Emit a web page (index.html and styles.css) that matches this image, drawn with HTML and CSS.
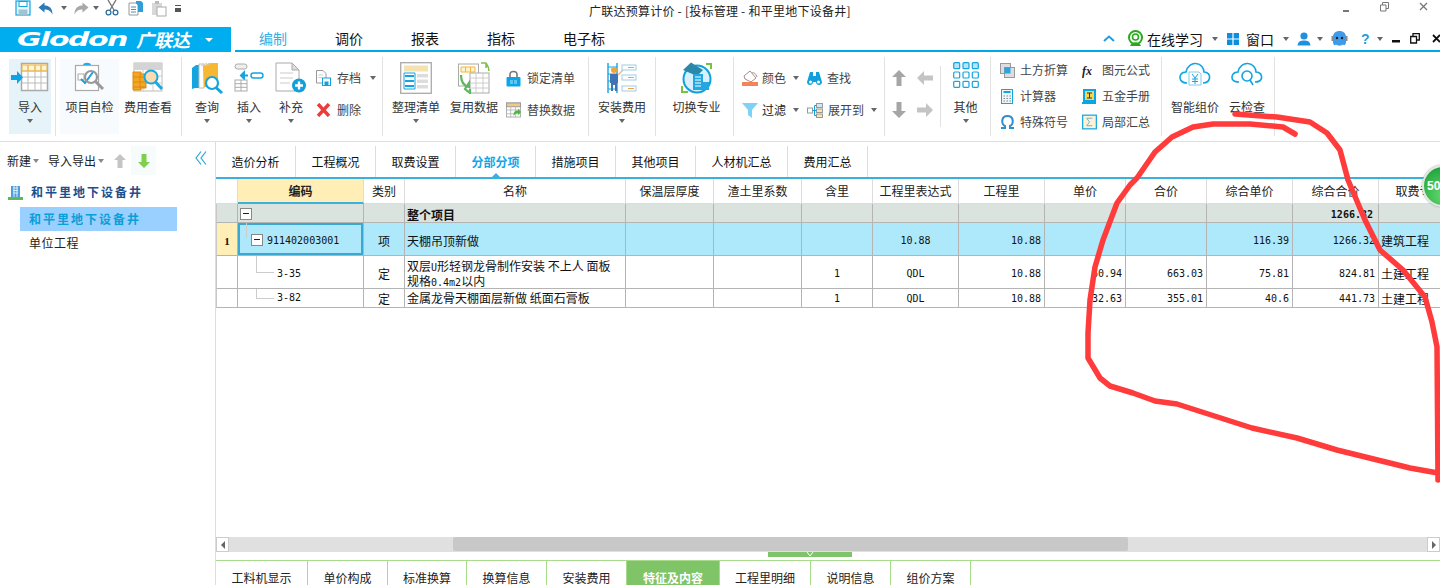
FILE: index.html
```html
<!DOCTYPE html>
<html lang="zh-CN">
<head>
<meta charset="utf-8">
<title>广联达预算计价</title>
<link rel="stylesheet" href="styles.css">
</head>
<body>
<div class="app">
  <header class="titlebar">
    <div class="qat">
      <svg class="q1" width="16" height="16" viewBox="0 0 16 16"><rect x="1" y="1" width="14" height="14" fill="#e8f6fd" stroke="#12a3e0" stroke-width="1.2"/><rect x="4" y="1.5" width="8" height="5" fill="#fff" stroke="#12a3e0"/><rect x="3.5" y="9.5" width="9" height="5.5" fill="#9fc4d6"/></svg>
      <svg class="q2" width="15" height="13" viewBox="0 0 15 13"><path d="M0.5 5.5 L6.5 0.5 V3.5 C11 3.5 14.5 6 14.5 12.5 C12.5 8.5 10 7.5 6.5 7.5 V10.5 Z" fill="#2c79b8"/></svg>
      <span class="caret q3"></span>
      <svg class="q4" width="15" height="13" viewBox="0 0 15 13"><path d="M14.5 5.5 L8.5 0.5 V3.5 C4 3.5 0.5 6 0.5 12.5 C2.5 8.5 5 7.5 8.5 7.5 V10.5 Z" fill="#a8a8a8"/></svg>
      <span class="caret q5"></span>
      <svg class="q6" width="14" height="16" viewBox="0 0 14 16"><path d="M3 0 L9 10 M11 0 L5 10" stroke="#777" stroke-width="1.4" fill="none"/><circle cx="3.5" cy="12.5" r="2.4" fill="none" stroke="#2f6f9f" stroke-width="1.3"/><circle cx="10.5" cy="12.5" r="2.4" fill="none" stroke="#2f6f9f" stroke-width="1.3"/></svg>
      <svg class="q7" width="16" height="16" viewBox="0 0 16 16"><path d="M1 3 H8 L10 5 V15 H1 Z" fill="#fff" stroke="#999"/><path d="M3 7 H8 M3 9.5 H8 M3 12 H8" stroke="#4a8fb5"/><path d="M8 1 H13 L15 3 V12 H10 V5 L8 3 Z" fill="#2f9fd6"/></svg>
      <svg class="q8" width="16" height="17" viewBox="0 0 16 17"><rect x="1" y="3" width="10" height="12" fill="#d8d8d8"/><rect x="4" y="1" width="4" height="3" fill="#bbb"/><rect x="6" y="7" width="9" height="9" fill="#fff" stroke="#aaa"/></svg>
      <span class="more"></span>
    </div>
    <div class="apptitle">广联达预算计价 - [投标管理 - 和平里地下设备井]</div>
    <div class="winbtns">
      <svg width="8" height="16" viewBox="0 0 8 16"><rect x="1" y="8" width="6" height="2" fill="#777"/></svg>
      <svg width="9" height="10" viewBox="0 0 9 10"><path d="M0.5 3 H6 V9 H0.5 Z M2.5 3 V0.5 H8.5 V6.5 H6" fill="none" stroke="#777"/></svg>
      <svg width="9" height="10" viewBox="0 0 9 10"><path d="M1 1 L8 8 M8 1 L1 8" stroke="#777" stroke-width="1.3"/></svg>
    </div>
  </header>

  <nav class="menubar">
    <div class="logo"><span class="logo-en">Glodon</span><span class="logo-cn">广联达</span><span class="caret caret-w"></span></div>
    <div class="menutabs">
      <span class="mtab mtab-on">编制</span><span class="mtab">调价</span><span class="mtab">报表</span><span class="mtab">指标</span><span class="mtab mtab-last">电子标</span>
    </div>
    <div class="helpbar">
      <svg class="h1" width="12" height="7" viewBox="0 0 12 7"><path d="M1 6 L6 1.5 L11 6" fill="none" stroke="#1f9fe0" stroke-width="2"/></svg>
      <svg class="h2" width="17" height="18" viewBox="0 0 17 18"><circle cx="8.5" cy="7.5" r="6.5" fill="none" stroke="#2aa81e" stroke-width="2"/><circle cx="8.5" cy="7" r="3" fill="none" stroke="#2aa81e" stroke-width="1.6"/><path d="M3 16 C5 11 12 11 14 16 Z" fill="#2aa81e"/></svg>
      <span class="h3">在线学习</span><span class="caret h4"></span>
      <svg class="h5" width="12" height="12" viewBox="0 0 12 12"><path d="M0 0 H5.4 V5.4 H0 Z M6.6 0 H12 V5.4 H6.6 Z M0 6.6 H5.4 V12 H0 Z M6.6 6.6 H12 V12 H6.6 Z" fill="#0d8fe0"/></svg>
      <span class="h6">窗口</span><span class="caret h7"></span>
      <svg class="h8" width="14" height="14" viewBox="0 0 14 14"><circle cx="7" cy="4" r="3.6" fill="#1f8fe0"/><path d="M0.5 13.5 C1 9 4 8.5 7 8.5 C10 8.5 13 9 13.5 13.5 Z" fill="#1f8fe0"/></svg>
      <span class="caret h9"></span>
      <svg class="h10" width="17" height="17" viewBox="0 0 17 17"><path d="M2 7 C2 3 5 1 8.5 1 C12 1 15 3 15 7 V12 C15 15 13 16 12 14.5 C10.500 16 6.500 16 5 14.500 C4 16 2 15 2 12 Z" fill="#3f9be8"/><circle cx="6" cy="8" r="1.200" fill="#123"/><circle cx="11" cy="8" r="1.200" fill="#123"/><rect x="0.500" y="6" width="2" height="5" fill="#8a8a8a"/><rect x="14.500" y="6" width="2" height="5" fill="#8a8a8a"/></svg>
      <span class="h11">?</span><span class="caret h12"></span>
      <svg class="h13" width="8" height="3" viewBox="0 0 8 3"><rect width="8" height="2.500" fill="#111"/></svg>
      <svg class="h14" width="10" height="11" viewBox="0 0 10 11"><path d="M0.700 3.500 H6.500 V10 H0.700 Z M3 3.500 V0.700 H9.300 V7 H6.500" fill="none" stroke="#111" stroke-width="1.300"/></svg>
      <svg class="h15" width="9" height="9" viewBox="0 0 9 9"><path d="M1 1 L8 8 M8 1 L1 8" stroke="#111" stroke-width="1.800"/></svg>
    </div>
  </nav>

  <section class="ribbon">
    <div class="group g1">
      <div class="bigbtn w42 hot">
        <div class="ico"><svg width="38" height="30" viewBox="0 0 38 30"><rect x="10.500" y="1.500" width="26" height="27" fill="#fff" stroke="#aaa" stroke-width="1.500"/><path d="M12 3 H35 V9 H12 Z" fill="#fff3d0"/><path d="M11 9 H36 M11 15 H36 M11 21 H36 M17 3 V28 M24 3 V28 M30 3 V28" stroke="#bbb" fill="none"/><path d="M11 3 H36 V9 H11 Z M17 3 V9 M24 3 V9 M30 3 V9" stroke="#f7b733" fill="none"/><path d="M0 13 H6 V9 L12 15.500 L6 22 V18 H0 Z" fill="#0aa5e8"/></svg></div>
        <span class="lbl">导入</span><span class="caret"></span>
      </div>
    </div>
    <div class="group g2">
      <div class="bigbtn w59 soft">
        <div class="ico"><svg width="32" height="30" viewBox="0 0 32 30"><rect x="1.500" y="3.500" width="23" height="25" fill="#fff" stroke="#aaa" stroke-width="1.200"/><path d="M9 3 C9 0 17 0 17 3 Z" fill="#2da8e0"/><rect x="4" y="12" width="6" height="6" fill="#fff" stroke="#aaa"/><path d="M7 17 L11 21 L19 10" fill="none" stroke="#1a9ee0" stroke-width="2"/><circle cx="17" cy="15" r="6" fill="none" stroke="#999" stroke-width="2.200"/><path d="M21.500 19.500 L29 27" stroke="#999" stroke-width="3"/></svg></div>
        <span class="lbl">项目自检</span>
      </div>
      <div class="bigbtn w58">
        <div class="ico"><svg width="32" height="30" viewBox="0 0 32 30"><rect x="2" y="1" width="28" height="28" fill="#fff" stroke="#bbb"/><rect x="2" y="1" width="28" height="7" fill="#d4d4d4"/><path d="M2 14 H30 M2 21 H30 M11 8 V29 M21 8 V29" stroke="#ccc"/><path d="M1 10 H9 V28 H1 Z" fill="#f5a623" stroke="#d98a10"/><path d="M8 12 H14 V26 H8 Z" fill="#f5a623" stroke="#d98a10"/><path d="M1 15 H14 M1 20 H14 M1 25 H14" stroke="#d98a10"/><circle cx="19" cy="15" r="6.500" fill="#fbdcb0" stroke="#1aa8e0" stroke-width="2"/><path d="M23.500 20 L30 27" stroke="#1aa8e0" stroke-width="3"/></svg></div>
        <span class="lbl">费用查看</span>
      </div>
    </div>
    <div class="group g3">
      <div class="bigbtn w42">
        <div class="ico"><svg width="32" height="32" viewBox="0 0 32 32"><path d="M1 6 L5 3 H8 V26 H4 L1 27 Z" fill="#14a5e0"/><path d="M8 2 H13 V26 H8 Z" fill="#fff" stroke="#bbb"/><path d="M12 4 L18 1 H27 V25 H13 Z" fill="#f7b733"/><path d="M10 4 L16 1 M14 4 L20 1" stroke="#ccc"/><circle cx="21" cy="21" r="6" fill="#fff" stroke="#14a5e0" stroke-width="2.200"/><path d="M25 25.500 L31 31" stroke="#14a5e0" stroke-width="3"/></svg></div>
        <span class="lbl">查询</span><span class="caret"></span>
      </div>
      <div class="bigbtn w42">
        <div class="ico"><svg width="30" height="30" viewBox="0 0 30 30"><rect x="1" y="2" width="12" height="5" rx="2.500" fill="#eee" stroke="#aaa"/><rect x="17" y="11" width="12" height="5" rx="2.500" fill="#fff" stroke="#12a5e0" stroke-width="1.400"/><path d="M14 13.500 H7 M7 13.500 L10 10.500 V16.500 Z" stroke="#12a5e0" stroke-width="2" fill="#12a5e0"/><rect x="1" y="18" width="12" height="11" fill="#fff" stroke="#aaa"/><path d="M1 21.700 H13 M1 25.300 H13 M7 18 V29" stroke="#aaa"/></svg></div>
        <span class="lbl">插入</span><span class="caret"></span>
      </div>
      <div class="bigbtn w42">
        <div class="ico"><svg width="32" height="31" viewBox="0 0 32 31"><path d="M1 1 H17 L24 8 V29 H1 Z" fill="#fff" stroke="#aaa"/><path d="M17 1 V8 H24 Z" fill="#ddd" stroke="#aaa"/><path d="M5 11 H18 M5 16 H18 M5 21 H15" stroke="#ddd" stroke-width="1.500"/><circle cx="24" cy="23.500" r="7" fill="#12a0dc"/><path d="M24 19.500 V27.500 M20 23.500 H28" stroke="#fff" stroke-width="2.400"/></svg></div>
        <span class="lbl">补充</span><span class="caret"></span>
      </div>
      <div class="smallcol">
        <div class="sm"><svg class="si" width="15" height="16" viewBox="0 0 15 16"><path d="M0.500 0.500 H7 L10 3.500 V13 H0.500 Z" fill="#fff" stroke="#999"/><path d="M2.500 5 H7 M2.500 7.500 H6" stroke="#ccc"/><rect x="6.500" y="8" width="8" height="7.500" fill="#fff" stroke="#12a0dc"/><rect x="8.500" y="11.500" width="4" height="4" fill="#12a0dc"/></svg><span class="smt">存档</span><span class="caret c12"></span></div>
        <div class="sm"><svg class="si" width="15" height="14" viewBox="0 0 15 14"><path d="M2 1 L13 13 M13 1 L2 13" stroke="#ec3b3b" stroke-width="3.400"/></svg><span class="smt">删除</span></div>
      </div>
    </div>
    <div class="group g4">
      <div class="bigbtn w58">
        <div class="ico"><svg width="32" height="32" viewBox="0 0 32 32"><rect x="0.700" y="0.700" width="30.600" height="30.600" fill="#fff" stroke="#aaa" stroke-width="1.300"/><rect x="4" y="3.500" width="24" height="6" fill="#f4e2b0"/><path d="M4 11 H15 V27 H4 Z" fill="#fff" stroke="#12a5e0"/><path d="M5 13 H14 V15 H5 Z M5 18 H14 V20 H5 Z M5 23 H14 V25 H5 Z" fill="#12a5e0"/><path d="M17 12 H28 V15.500 H17 Z M17 17.500 H28 V21 H17 Z M17 23 H28 V26.500 H17 Z" fill="#ddd"/></svg></div>
        <span class="lbl">整理清单</span><span class="caret"></span>
      </div>
      <div class="bigbtn w58">
        <div class="ico"><svg width="32" height="32" viewBox="0 0 32 32"><rect x="0.500" y="2" width="20" height="22" fill="#fff" stroke="#aaa"/><path d="M3 5 H17 V10 H3 Z M7.500 5 V10 M12.500 5 V10" fill="#fff3d0" stroke="#f7b733"/><rect x="12" y="11" width="19" height="20" fill="#fff" stroke="#aaa"/><path d="M12 16 H31 M12 21 H31 M12 26 H31 M18 11 V31 M25 11 V31" stroke="#ccc"/><path d="M3 13 C3 20 6 24 11 25 L11 21 L7 27 L12 31 V27" fill="none" stroke="#5cb85c" stroke-width="2.200"/><path d="M28 1 C30 4 31 6 31 9 M28 1 V6 M28 1 H23" fill="none" stroke="#7ac143" stroke-width="1.500"/></svg></div>
        <span class="lbl">复用数据</span>
      </div>
      <div class="smallcol">
        <div class="sm"><svg class="si" width="15" height="17" viewBox="0 0 15 17"><path d="M4 7 V4.500 C4 0.500 11 0.500 11 4.500 V7" fill="none" stroke="#777" stroke-width="1.600"/><rect x="0.500" y="7" width="14" height="9.500" rx="1" fill="#0aa5ea"/><path d="M4 11 H7 M8 11 H11 M4 13 H7 M8 13 H11" stroke="#bde6f8"/></svg><span class="smt smt-g">锁定清单</span></div>
        <div class="sm"><svg class="si" width="16" height="16" viewBox="0 0 16 16"><rect x="0.500" y="0.500" width="15" height="15" fill="#fff" stroke="#aaa"/><rect x="0.500" y="0.500" width="15" height="4" fill="#f1c984" stroke="#999"/><path d="M0 8 H16 M0 12 H16 M5 4 V16 M10 4 V16" stroke="#bbb"/><path d="M8 12 C9 9 11 8.500 13 8.500 V6.500 L16 10 L13 13.500 V11.500 C11 11.500 9.500 12 8 14 Z" fill="#4bb543"/></svg><span class="smt smt-g">替换数据</span></div>
      </div>
    </div>
    <div class="group g5">
      <div class="bigbtn w66">
        <div class="ico"><svg width="30" height="32" viewBox="0 0 30 32"><path d="M1 1 V31 M10 1 V31" stroke="#12a5e0" stroke-width="1.400"/><path d="M1 5 H10 M1 12 H10 M1 19 H10 M1 27 H10" stroke="#12a5e0"/><circle cx="7" cy="8" r="3" fill="#f2a23c"/><path d="M3 12 H11 V21 H10 V29 H8 V23 H6 V29 H4 V21 H3 Z" fill="#3f74b5"/><path d="M11 13 L16 8" stroke="#e6b98f" stroke-width="1.500"/><rect x="15" y="3" width="14" height="5" fill="#fff" stroke="#9ecde8"/><rect x="15" y="13" width="14" height="5" fill="#fff" stroke="#9ecde8"/><rect x="15" y="24" width="14" height="5" fill="#fff" stroke="#9ecde8"/><path d="M21 5.500 H27 M21 15.500 H27 M21 26.500 H27" stroke="#f2a23c"/></svg></div>
        <span class="lbl">安装费用</span><span class="caret"></span>
      </div>
    </div>
    <div class="group g6">
      <div class="bigbtn w77">
        <div class="ico"><svg width="32" height="32" viewBox="0 0 32 32"><circle cx="16" cy="17" r="13.500" fill="#d7f0fb" stroke="#12a0dc" stroke-width="2"/><path d="M2 8 L10 0.500 L22 8 L16 14 Z" fill="#2a89ab"/><rect x="12" y="12" width="10" height="16" fill="#22a7e0"/><rect x="21" y="20" width="7" height="8" fill="#22a7e0"/><path d="M14 15 H20 M14 18 H20 M14 21 H20 M14 24 H20" stroke="#fff"/><path d="M25 2 L30 2 L30 7 M1 24 L1 30 L7 30" stroke="#7ac143" stroke-width="2" fill="none"/></svg></div>
        <span class="lbl">切换专业</span>
      </div>
    </div>
    <div class="group g7">
      <div class="sm2">
        <svg class="si2" width="16" height="16" viewBox="0 0 16 16"><path d="M2 6 L8 1 L14 8 L9 12 L3 9 Z" fill="#fff" stroke="#a88"/><path d="M10 3 C12 2 14 4 15 7" stroke="#a88" fill="none"/><rect y="12" width="16" height="4" fill="#f5835a"/></svg><span class="smt">颜色</span><span class="caret c11"></span>
        <svg class="si3" width="15" height="15" viewBox="0 0 15 15"><path d="M3 1 H6 V5 H9 V1 H12 L15 11 C15 15 9 15 9 11 H6 C6 15 0 15 0 11 Z" fill="#12a0dc"/><circle cx="3.500" cy="11" r="1.500" fill="#fff"/><circle cx="11.500" cy="11" r="1.500" fill="#fff"/></svg><span class="smt">查找</span>
      </div>
      <div class="sm2">
        <svg class="si2" width="16" height="16" viewBox="0 0 16 16"><path d="M0 1 H16 L10 8 V16 L6 13 V8 Z" fill="#7fd2f2"/></svg><span class="smt smt-d">过滤</span><span class="caret c11"></span>
        <svg class="si3" width="16" height="15" viewBox="0 0 16 15"><rect x="0.500" y="5" width="5" height="5" fill="#fff" stroke="#999"/><rect x="9.500" y="0.500" width="6" height="4" fill="#cde9f7" stroke="#999"/><rect x="9.500" y="6" width="6" height="3.500" fill="#f8e4b8" stroke="#999"/><rect x="9.500" y="11" width="6" height="3.500" fill="#f8e4b8" stroke="#999"/><path d="M5.500 7.500 H9.500 M7.500 2.500 V12.500 M7.500 2.500 H9.500 M7.500 12.500 H9.500" stroke="#12a0dc" fill="none"/></svg><span class="smt">展开到</span><span class="caret c11"></span>
      </div>
    </div>
    <div class="group g8">
      <svg width="14" height="16" viewBox="0 0 14 16"><path d="M7 0 L14 7 H9.500 V16 H4.500 V7 H0 Z" fill="#a6a6a6"/></svg>
      <svg width="16" height="14" viewBox="0 0 16 14"><path d="M0 7 L7 0 V4.500 H16 V9.500 H7 V14 Z" fill="#c4c4c4"/></svg>
      <svg width="14" height="16" viewBox="0 0 14 16"><path d="M7 16 L14 9 H9.500 V0 H4.500 V9 H0 Z" fill="#a6a6a6"/></svg>
      <svg width="16" height="14" viewBox="0 0 16 14"><path d="M16 7 L9 0 V4.500 H0 V9.500 H9 V14 Z" fill="#c4c4c4"/></svg>
    </div>
    <div class="group g9">
      <div class="bigbtn w49">
        <div class="ico"><svg width="26" height="26" viewBox="0 0 26 26"><g fill="#fff" stroke="#12a5e0" stroke-width="1.200"><rect x="0.700" y="0.700" width="6" height="6" rx="1" fill="#b8e4f6"/><rect x="10" y="0.700" width="6" height="6" rx="1" fill="#b8e4f6"/><rect x="19.300" y="0.700" width="6" height="6" rx="1" fill="#b8e4f6"/><rect x="0.700" y="10" width="6" height="6" rx="1"/><rect x="10" y="10" width="6" height="6" rx="1"/><rect x="19.300" y="10" width="6" height="6" rx="1"/><rect x="0.700" y="19.300" width="6" height="6" rx="1"/><rect x="10" y="19.300" width="6" height="6" rx="1"/><rect x="19.300" y="19.300" width="6" height="6" rx="1"/></g></svg></div>
        <span class="lbl">其他</span><span class="caret"></span>
      </div>
    </div>
    <div class="group g10">
      <div class="sm3"><svg width="15" height="15" viewBox="0 0 15 15"><rect x="0.500" y="0.500" width="10" height="10" fill="#ddd" stroke="#999"/><rect x="4.500" y="4.500" width="10" height="10" fill="#ddd" stroke="#999"/><rect x="4.500" y="4.500" width="6" height="6" fill="#27a5e0"/></svg><span class="smt">土方折算</span></div>
      <div class="sm3"><svg width="15" height="15" viewBox="0 0 15 15"><text class="fx" x="0" y="12">fx</text></svg><span class="smt">图元公式</span></div>
      <div class="sm3"><svg width="15" height="15" viewBox="0 0 15 15"><rect x="1.500" y="0.500" width="11" height="14" fill="#eaf7fd" stroke="#12a5e0"/><path d="M3.500 3 H10.500" stroke="#12a5e0" stroke-width="2"/><path d="M3.500 7 H5 M6.500 7 H8 M9.500 7 H11 M3.500 9.500 H5 M6.500 9.500 H8 M9.500 9.500 H11 M3.500 12 H5 M6.500 12 H8 M9.500 12 H11" stroke="#888"/></svg><span class="smt">计算器</span></div>
      <div class="sm3"><svg width="15" height="15" viewBox="0 0 15 15"><rect x="1" y="0" width="13" height="13" fill="#08a5e8"/><rect x="0" y="13" width="14" height="2" fill="#08a5e8"/><rect x="3" y="2" width="9" height="9" fill="#f3d84f"/><path d="M5 4 H10 M7.500 4 V9 M5 9 H10" stroke="#333"/></svg><span class="smt">五金手册</span></div>
      <div class="sm3"><svg width="15" height="14" viewBox="0 0 15 14"><path d="M1 13 H5 V11 C1 9 1 1 7.500 1 C14 1 14 9 10 11 V13 H14" fill="none" stroke="#2a8ecf" stroke-width="2"/></svg><span class="smt">特殊符号</span></div>
      <div class="sm3"><svg width="16" height="16" viewBox="0 0 16 16"><rect x="0.700" y="0.700" width="14.600" height="14.600" fill="#fbf3d8" stroke="#12a5e0" stroke-width="1.300"/><path d="M11 4 H5 L8 8 L5 12 H11" fill="none" stroke="#7da9c0"/></svg><span class="smt">局部汇总</span></div>
    </div>
    <div class="group g11">
      <div class="bigbtn w56">
        <div class="ico"><svg width="32" height="24" viewBox="0 0 32 24"><path d="M8 21 C2 21 0 17 1.500 13 C3 10 6 10 7 10 C8 4 13 1 17 1.500 C22 2 25 6 25 10 C29 10 31 13 30.500 16 C30 19 28 21 24 21" fill="none" stroke="#12a5e0" stroke-width="1.600"/><path d="M10 10 H20 L22 12 V23 H10 Z" fill="#fff" stroke="#7fcdee"/><path d="M13 12 L16 16 L19 12 M16 16 V22 M13 17 H19 M13 19.500 H19" fill="none" stroke="#12a5e0"/></svg></div>
        <span class="lbl">智能组价</span>
      </div>
      <div class="bigbtn w48">
        <div class="ico"><svg width="32" height="24" viewBox="0 0 32 24"><path d="M8 20 C2 20 0 17 1.500 13 C3 10 6 10 7 10 C8 4 13 1 17 1.500 C22 2 25 6 25 10 C29 10 31 13 30.500 16 C30 19 28 20 24 20" fill="none" stroke="#12a5e0" stroke-width="1.600"/><circle cx="16" cy="14" r="5" fill="#fff" stroke="#12a5e0" stroke-width="1.600"/><path d="M19 18 L22 23" stroke="#12a5e0" stroke-width="1.600"/></svg></div>
        <span class="lbl">云检查</span>
      </div>
    </div>
  </section>

  <div class="workspace">
    <aside class="side">
      <div class="sidetools">
        <span class="st">新建</span><span class="caret c1"></span>
        <span class="st st2">导入导出</span><span class="caret c1"></span>
        <svg class="upa" width="12" height="14" viewBox="0 0 12 14"><path d="M6 0 L12 6 H8.500 V14 H3.500 V6 H0 Z" fill="#c4c4c4"/></svg>
        <span class="downbox"><svg width="12" height="14" viewBox="0 0 12 14"><path d="M6 14 L12 8 H8.500 V0 H3.500 V8 H0 Z" fill="#7fcf4a"/></svg></span>
      </div>
      <svg class="collapse" width="12" height="14" viewBox="0 0 12 14"><path d="M6 0.500 L1 7 L6 13.500 M11 0.500 L6 7 L11 13.500" fill="none" stroke="#2aa5dc" stroke-width="1.200"/></svg>
      <div class="tree">
        <div class="root"><svg width="15" height="15" viewBox="0 0 15 15"><rect x="3" y="1" width="9" height="11" fill="#4f9fe0"/><path d="M5 3 H10 M5 5.500 H10 M5 8 H10 M6 1 V12 M9 1 V12" stroke="#d8eefb"/><rect y="12" width="15" height="3" fill="#5cb85c"/></svg><span>和平里地下设备井</span></div>
        <div class="node node-on">和平里地下设备井</div>
        <div class="node">单位工程</div>
      </div>
    </aside>

    <main class="main">
      <div class="tabs">
        <span class="tab">造价分析</span><span class="tab">工程概况</span><span class="tab">取费设置</span><span class="tab tab-on">分部分项</span><span class="tab">措施项目</span><span class="tab">其他项目</span><span class="tab tab-w">人材机汇总</span><span class="tab">费用汇总</span>
      </div>
      <div class="gridwrap">
        <table class="grid">
          <colgroup>
            <col class="c-no"><col class="c-code"><col class="c-type"><col class="c-name"><col class="c-88"><col class="c-88"><col class="c-71"><col class="c-86"><col class="c-86"><col class="c-81"><col class="c-81"><col class="c-86"><col class="c-86"><col class="c-82">
          </colgroup>
          <thead>
            <tr><th></th><th class="th-code">编码</th><th>类别</th><th>名称</th><th>保温层厚度</th><th>渣土里系数</th><th>含里</th><th>工程里表达式</th><th>工程里</th><th>单价</th><th>合价</th><th>综合单价</th><th>综合合价</th><th>取费专业</th></tr>
          </thead>
          <tbody>
            <tr class="r-all"><td></td><td class="code"><span class="tog t0"></span></td><td></td><td class="txt"><b>整个项目</b></td><td></td><td></td><td></td><td></td><td></td><td></td><td></td><td></td><td class="num numb">1266.32</td><td></td></tr>
            <tr class="r-sel"><td class="no">1</td><td class="code sel"><span class="vl vl0"></span><span class="tog t1"></span><span class="mono cd">911402003001</span></td><td class="ctr">项</td><td class="txt">天棚吊顶新做</td><td></td><td></td><td></td><td class="mono ctr">10.88</td><td class="num">10.88</td><td></td><td></td><td class="num">116.39</td><td class="num">1266.32</td><td class="txt">建筑工程</td></tr>
            <tr class="r-two"><td></td><td class="code"><span class="vl vl1"></span><span class="hl"></span><span class="mono sub">3-35</span></td><td class="ctr">定</td><td class="txt nm">双层<span class="u">U</span>形轻钢龙骨制作安装 不上人 面板<br>规格<span class="mono">0.4m2</span>以内</td><td></td><td></td><td class="mono ctr">1</td><td class="mono ctr">QDL</td><td class="num">10.88</td><td class="num">60.94</td><td class="num">663.03</td><td class="num">75.81</td><td class="num">824.81</td><td class="txt">土建工程</td></tr>
            <tr class="r-one"><td></td><td class="code"><span class="vl vl2"></span><span class="hl"></span><span class="mono sub">3-82</span></td><td class="ctr">定</td><td class="txt nm">金属龙骨天棚面层新做 纸面石膏板</td><td></td><td></td><td class="mono ctr">1</td><td class="mono ctr">QDL</td><td class="num">10.88</td><td class="num">32.63</td><td class="num">355.01</td><td class="num">40.6</td><td class="num">441.73</td><td class="txt">土建工程</td></tr>
          </tbody>
        </table>
      </div>
      <div class="hscroll">
        <span class="sbtn"><i class="tri-l"></i></span>
        <div class="track"><div class="thumb"></div></div>
        <span class="sbtn"><i class="tri-r"></i></span>
      </div>
      <div class="handlerow"><div class="handle"><svg width="10" height="5" viewBox="0 0 10 5"><path d="M2 0 L5 4 L8 0" fill="none" stroke="#fff"/></svg></div></div>
      <div class="btabs">
        <span class="btab b92">工料机显示</span><span class="btab b80">单价构成</span><span class="btab b79">标准换算</span><span class="btab b80">换算信息</span><span class="btab b80">安装费用</span><span class="btab b93 btab-on">特征及内容</span><span class="btab b91">工程里明细</span><span class="btab b80">说明信息</span><span class="btab b80">组价方案</span>
      </div>
    </main>
  </div>
</div>

<div class="badge">50</div>
<svg class="scribble" width="1440" height="585" viewBox="0 0 1440 585"><polyline points="1295,134 1283,127 1250,124 1213,124 1193,127 1172,137 1155,152 1137,178 1130,185 1117,203 1103,240 1095,267 1090,300 1088,333 1088,358 1100,378 1110,386 1133,393 1155,401 1177,404 1252,428 1297,438 1337,450 1410,468 1438,473 1438,480 1437,347 1432,322 1425,297 1403,270 1380,250 1365,220 1348,180 1340,150 1327,133 1310,122 1277,117 1235,114"/></svg>
</body>
</html>
```
FILE: styles.css
```css
* { box-sizing: border-box; }
html, body { margin: 0; padding: 0; }
body {
  position: relative;
  width: 1440px;
  height: 585px;
  overflow: hidden;
  background: #fff;
  color: #222;
  font: 12px/16px "Noto Sans CJK SC", "Liberation Sans", sans-serif;
}
svg { display: block; flex: none; }
.app { display: flex; flex-direction: column; height: 585px; }
.caret { display: block; flex: none; width: 0; height: 0; border-style: solid; border-width: 4px 3.5px 0; border-color: #666 transparent transparent; }

/* title bar */
.titlebar { height: 27px; position: relative; display: flex; justify-content: space-between; flex: none; }
.qat { display: flex; align-items: center; height: 16px; padding-left: 15px; }
.q2 { margin-left: 7px; }
.q3 { margin-left: 8px; }
.q4 { margin-left: 7px; }
.q5 { margin-left: 4px; }
.q6 { margin-left: 6px; }
.q7 { margin-left: 9px; }
.q8 { margin-left: 7px; }
.more { margin-left: 8px; width: 6px; height: 7px; border-top: 1px solid #555; border-bottom: 4px solid #555; }
.apptitle { position: absolute; left: 589px; top: 3px; font-size: 12px; line-height: 16px; white-space: nowrap; letter-spacing: .02em; }
.winbtns { display: flex; align-items: flex-start; gap: 30px; padding: 2px 12px 0 0; }

/* menu bar */
.menubar { height: 25px; display: flex; flex: none; position: relative; }
.logo { width: 231px; background: #00adef; display: flex; align-items: center; padding-left: 17px; color: #fff; }
.logo-en { font: italic bold 20px/25px "DejaVu Sans", sans-serif; display: inline-block; width: 115px; transform: scaleX(1.5); transform-origin: left center; letter-spacing: -1px; }
.logo-cn { font-size: 18px; font-weight: 700; line-height: 25px; width: 54px; margin-left: 4px; font-style: italic; white-space: nowrap; }
.caret-w { border-top-color: #fff; margin-left: 15px; border-width: 4px 4px 0; }
.menutabs { display: flex; margin-left: 4px; flex: 1; border-bottom: 2px solid #00a8e8; height: 25px; }
.mtab { width: 76px; text-align: center; font-size: 14px; line-height: 22px; color: #111; }
.mtab-last { width: 90px; }
.mtab-on { color: #35aee6; border-bottom: 2px solid #00a8e8; height: 25px; }
.helpbar { position: absolute; left: 1103px; top: 0; height: 23px; display: flex; align-items: center; }
.h1 { margin-left: 0; }
.h2 { margin-left: 12px; }
.h3 { margin-left: 3px; width: 56px; font-size: 14px; white-space: nowrap; color: #111; }
.h4 { margin-left: 9px; }
.h5 { margin-left: 9px; }
.h6 { margin-left: 7px; width: 28px; font-size: 14px; white-space: nowrap; color: #111; }
.h7 { margin-left: 9px; }
.h8 { margin-left: 8px; }
.h9 { margin-left: 6px; }
.h10 { margin-left: 8px; }
.h11 { margin-left: 13px; width: 8px; color: #1f9fe0; font: bold 14px/16px "Liberation Sans", sans-serif; }
.h12 { margin-left: 8px; }
.h13 { margin-left: 9px; margin-top: 5px; }
.h14 { margin-left: 10px; }
.h15 { margin-left: 12px; }

/* ribbon */
.ribbon { height: 90px; flex: none; display: flex; padding-top: 5px; border-bottom: 1px solid #e0e0e0; }
.group { height: 79px; border-right: 1px solid #e2e2e2; display: flex; flex: none; padding-top: 2px; }
.g1 { width: 56px; padding-left: 9px; }
.g2 { width: 126px; padding-left: 4px; }
.g3 { width: 201px; padding-left: 4px; }
.g4 { width: 206px; padding-left: 4px; }
.g5 { width: 67px; }
.g6 { width: 78px; padding-left: 2px; }
.g7 { width: 151px; padding: 5px 0 0 8px; flex-direction: column; }
.g8 { width: 56px; height: 61px; margin-top: 9px; padding: 0 0 0 5px; display: grid; grid-template-columns: 18px 18px; grid-template-rows: 24px 40px; justify-items: center; align-items: center; gap: 0 8px; }
.g9 { width: 50px; height: 79px; }
.g10 { width: 171px; padding: 0 0 0 9px; display: grid; grid-template-columns: 82px 82px; grid-auto-rows: 26px; }
.g11 { width: 113px; padding-left: 5px; }

.bigbtn { display: flex; flex-direction: column; align-items: center; height: 75px; flex: none; }
.ico { height: 40px; display: flex; align-items: flex-start; justify-content: center; padding-top: 3px; }
.lbl { line-height: 16px; color: #333; white-space: nowrap; }
.bigbtn .caret { margin-top: 4px; }
.w42 { width: 42px; } .w48 { width: 48px; } .w49 { width: 49px; } .w56 { width: 56px; } .w58 { width: 58px; } .w59 { width: 59px; } .w66 { width: 66px; } .w77 { width: 77px; }
.hot { background: #e6f3f8; }
.soft { background: #f7fbfd; }

.smallcol { display: flex; flex-direction: column; padding: 3px 0 0 3px; }
.sm { height: 32px; display: flex; align-items: center; }
.si { width: 15px; margin-right: 6px; }
.smt { color: #444; white-space: nowrap; }
.smt-g { color: #444; }
.smt-d { color: #222; }
.c12 { margin-left: 9px; }
.g3 .smallcol { padding-left: 4px; }
.sm2 { height: 32px; display: flex; align-items: center; }
.si2 { margin-right: 4px; }
.si3 { margin: 0 5px 0 0; }
.c11 { margin: 0 8px 0 7px; }
.sm3 { display: flex; align-items: center; gap: 5px; }
.sm3 svg { width: 15px; }
.fx { font: italic bold 12px "Liberation Serif", serif; fill: #222; }

/* workspace */
.workspace { flex: 1; display: flex; min-height: 0; }
.side { width: 216px; flex: none; border-right: 1px solid #ddd; position: relative; }
.sidetools { height: 33px; padding: 4px 0 0 7px; display: flex; align-items: center; }
.st { color: #222; white-space: nowrap; }
.c1 { margin: 0 10px 0 2px; border-color: #888 transparent transparent; }
.c1 + .st2 { margin-left: -1px; }
.upa { margin-left: 0; }
.downbox { margin-left: 5px; width: 25px; height: 29px; background: #f6fbfb; display: flex; align-items: center; justify-content: center; }
.collapse { position: absolute; left: 195px; top: 9px; }
.tree { padding-top: 8px; }
.root { display: flex; align-items: center; height: 18px; padding-left: 8px; color: #1e4f8c; font-weight: 700; font-size: 12px; letter-spacing: 2px; }
.root span { margin-left: 8px; white-space: nowrap; }
.node { height: 24px; line-height: 24px; margin: 0 38px 0 20px; padding-left: 9px; letter-spacing: .5px; }
.root + .node { margin-top: 6px; }
.node-on { background: #99d0ff; color: #0b9ed8; font-weight: 700; letter-spacing: 2px; white-space: nowrap; }

/* main */
.main { flex: 1; min-width: 0; display: flex; flex-direction: column; }
.tabs { height: 37px; flex: none; padding-top: 4px; display: flex; border-bottom: 2px solid #3cb0dc; }
.tab { width: 80px; height: 31px; border-right: 1px solid #ddd; text-align: center; line-height: 31px; color: #111; position: relative; }
.tab-w { width: 92px; }
.tab-on { color: #12a5e8; font-weight: 700; }
.tab-on::after { content: ""; position: absolute; left: 36px; bottom: 0; border-style: solid; border-width: 0 4px 4px; border-color: transparent transparent #3cb0dc; }
.gridwrap { height: 358px; flex: none; overflow: hidden; }
.grid { table-layout: fixed; width: 1245px; border-collapse: separate; border-spacing: 0; }
.c-no { width: 22px; } .c-code { width: 126px; } .c-type { width: 41px; } .c-name { width: 221px; }
.c-88 { width: 88px; } .c-71 { width: 71px; } .c-86 { width: 86px; } .c-81 { width: 81px; } .c-82 { width: 82px; }
.grid th { height: 25px; font-weight: 400; border-right: 1px solid #dcdcdc; border-bottom: 1px solid #dcdcdc; padding: 0; line-height: 16px; color: #222; }
.grid .th-code { background: #ffeeb5; font-weight: 700; border-bottom: 2px solid #3cb0dc; }
.grid td { padding: 3px 0 0; border-right: 1px solid #b4b4b4; border-bottom: 1px solid #b4b4b4; line-height: 14px; color: #111; position: relative; }
.grid td:first-child { border-left: 1px solid #c8c8c8; }
.r-all td { height: 19px; background: #dbe3df; }
.r-sel td { height: 33px; background: #ade8fb; }
.r-two td { height: 33px; }
.grid .r-one td { height: 19px; padding-top: 1px; }
.no { text-align: center; font: bold 11px/14px "Liberation Serif", serif; background: #ffeeb5 !important; }
.sel { box-shadow: inset 0 0 0 2px #3aa8d0; }
.txt { padding-left: 2px !important; white-space: nowrap; }
.ctr { text-align: center; }
.num { text-align: right; padding-right: 3px !important; font: 10px/14px "DejaVu Sans Mono", monospace; }
.numb { font-weight: 700; padding-right: 5px !important; }
.mono { font-family: "DejaVu Sans Mono", monospace; font-size: 10px; }
.u { font-family: "DejaVu Sans Mono", monospace; font-size: 10px; }
.grid .nm { line-height: 15px; padding-top: 1px; }
.nm .mono, .nm .u { line-height: 10px; }
.grid .r-one .nm { padding-top: 0; line-height: 14px; }
.tog { position: absolute; width: 12px; height: 12px; border: 1px solid #888; background: #fff; }
.tog::after { content: ""; position: absolute; left: 2px; right: 2px; top: 4px; height: 1px; background: #222; }
.t0 { left: 2px; top: 4px; }
.t1 { left: 13px; top: 11px; }
.cd { position: absolute; left: 29px; top: 11px; }
.sub { position: absolute; left: 39px; }
.r-two .sub { top: 11px; }
.r-one .sub { top: 2px; }
.vl { position: absolute; width: 1px; background: #ccc; }
.vl0 { left: 8px; top: 0; height: 15px; }
.vl1 { left: 18px; top: 0; height: 16px; }
.vl2 { left: 18px; top: 0; height: 10px; }
.hl { position: absolute; left: 18px; width: 18px; height: 1px; background: #ccc; }
.r-two .hl { top: 16px; }
.r-one .hl { top: 9px; }

.hscroll { height: 15px; flex: none; background: #e0e0e0; display: flex; }
.sbtn { width: 13px; height: 15px; background: #fff; border: 1px solid #ccc; display: flex; align-items: center; justify-content: center; }
.tri-l { border-style: solid; border-width: 4px 4px 4px 0; border-color: transparent #666 transparent transparent; }
.tri-r { border-style: solid; border-width: 4px 0 4px 4px; border-color: transparent transparent transparent #666; }
.track { flex: 1; }
.thumb { margin-left: 224px; width: 675px; height: 14px; background: #c8c8c8; border-radius: 2px; }
.handlerow { height: 8px; flex: none; }
.handle { margin-left: 552px; width: 84px; height: 5px; background: #7fc46a; display: flex; justify-content: center; }
.btabs { flex: 1; display: flex; border-top: 1px solid #a8dc8c; }
.btab { height: 30px; border-right: 1px solid #a8dc8c; text-align: center; line-height: 33px; color: #222; }
.b79 { width: 79px; } .b80 { width: 80px; } .b91 { width: 91px; } .b92 { width: 92px; } .b93 { width: 93px; }
.btab-on { background: #80c468; color: #fff; font-weight: 700; }

/* overlays */
.badge {
  position: absolute; left: 1422px; top: 165px; width: 42px; height: 42px; border-radius: 50%;
  background: radial-gradient(circle at 50% 75%, #62d86a, #2bae45 70%, #1a8a36);
  border: 2px solid #dfe8e0; box-shadow: 0 0 2px #888;
  color: #fff; font: bold 12px/38px "Liberation Sans", sans-serif; padding-left: 3px;
}
.scribble { position: absolute; left: 0; top: 0; pointer-events: none; }
.scribble polyline { fill: none; stroke: #ff3b3b; stroke-width: 5.5; stroke-linejoin: round; stroke-linecap: round; }
```
